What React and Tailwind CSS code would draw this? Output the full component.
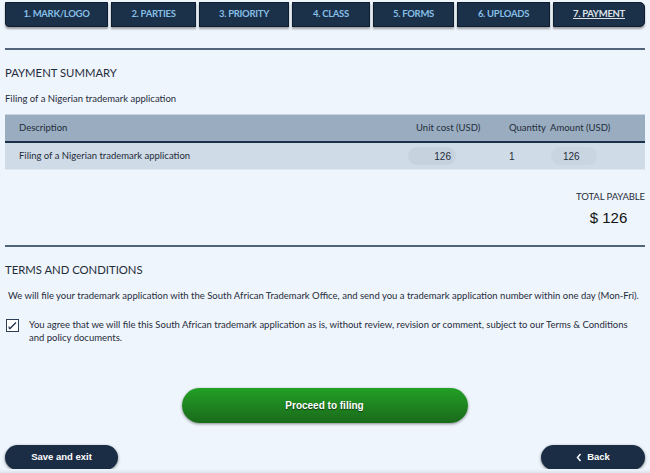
export default function App() {
  const tabs = [
    { label: "1. MARK/LOGO", w: "w-[103px]" },
    { label: "2. PARTIES", w: "w-[85px]" },
    { label: "3. PRIORITY", w: "w-[90px]" },
    { label: "4. CLASS", w: "w-[78px]" },
    { label: "5. FORMS", w: "w-[81px]" },
    { label: "6. UPLOADS", w: "w-[93px]" },
  ];
  return (
    <div className="w-[650px] h-[473px] overflow-hidden bg-[#eff5fd] text-[#1f2c3a] relative" style={{ fontFamily: "Lato, 'Open Sans', sans-serif" }}>
      <div className="px-[5px] pt-[2px]">
        <div className="flex gap-[3px] h-[25px]">
          {tabs.map((t, i) => (
            <div key={t.label} className={`${t.w} h-full bg-[#1b3049] border border-[#0f1c2c] shadow-[0_2px_2px_rgba(0,0,0,0.35)] flex items-center justify-center text-[9.5px] font-bold text-[#86bfe6] tracking-[-0.3px] ${i === 0 ? "rounded-bl-[4px]" : ""}`}>
              {t.label}
            </div>
          ))}
          <div className="flex-1 h-full bg-[#1b3049] border border-[#0f1c2c] rounded-r-[5px] shadow-[0_2px_2px_rgba(0,0,0,0.35)] flex items-center justify-center text-[9.5px] font-bold text-[#dfe3e8] underline tracking-[-0.3px]">
            7. PAYMENT
          </div>
        </div>

        <div className="mt-[21px] h-[2px] bg-[#51647a]" />

        <div className="mt-[15px] text-[11.3px] leading-[16px] text-[#1f2c3a]">PAYMENT SUMMARY</div>
        <div className="mt-[12px] text-[9.5px] leading-[12px]">Filing of a Nigerian trademark application</div>

        <div className="mt-[9px]">
          <div className="h-[29px] bg-[#99acc0] border-b-2 border-[#1a3048] border-t border-t-[#c8d4e0] flex items-center text-[9.5px] text-[#1f2c3a]">
            <div className="pl-[14px] w-[411px]">Description</div>
            <div className="w-[93px]">Unit cost (USD)</div>
            <div className="w-[41px]">Quantity</div>
            <div>Amount (USD)</div>
          </div>
          <div className="h-[27px] bg-[#cfdbe6] border-b border-[#dfe7ef] flex items-center text-[9.5px]">
            <div className="pl-[14px] w-[403px]">Filing of a Nigerian trademark application</div>
            <div className="w-[101px] flex">
              <div className="w-[48px] h-[18px] rounded-full bg-[#c6d3df] flex items-center justify-end pr-[5px] text-[10px]" style={{ fontFamily: "'Liberation Sans', Arial, sans-serif" }}>126</div>
            </div>
            <div className="w-[42px] text-[10px]" style={{ fontFamily: "'Liberation Sans', Arial, sans-serif" }}>1</div>
            <div className="w-[46px] h-[18px] rounded-full bg-[#c9d5e1] flex items-center pl-[12px] text-[10px]" style={{ fontFamily: "'Liberation Sans', Arial, sans-serif" }}>126</div>
          </div>
        </div>

        <div className="flex justify-end mt-[21px]">
          <div className="flex flex-col items-center">
            <div className="text-[9.5px] leading-[12px] tracking-[-0.1px]">TOTAL PAYABLE</div>
            <div className="mt-[6px] text-[15px] leading-[18px] text-[#111] pr-[4px]" style={{ fontFamily: "'Liberation Sans', Arial, sans-serif" }}>$ 126</div>
          </div>
        </div>

        <div className="mt-[18px] h-[2px] bg-[#51647a]" />

        <div className="mt-[15px] text-[11.3px] leading-[16px]">TERMS AND CONDITIONS</div>
        <div className="mt-[12px] pl-[3px] text-[9.5px] leading-[12px]">
          We will file your trademark application with the South African Trademark Office, and send you a trademark application number within one day (Mon-Fri).
        </div>
        <div className="mt-[16px] flex items-start">
          <div className="w-[13px] h-[13px] mt-[1px] ml-[1px] border border-[#2a3e57] bg-white flex items-center justify-center shrink-0">
            <svg width="9" height="9" viewBox="0 0 9 9"><path d="M1.5 8 L8 1.5" stroke="#1b2d45" strokeWidth="1.3" /><path d="M1 5.5 L1.5 8" stroke="#1b2d45" strokeWidth="1.2" /></svg>
          </div>
          <div className="ml-[10px] text-[9.5px] leading-[13px] w-[600px]">
            You agree that we will file this South African trademark application as is, without review, revision or comment, subject to our Terms &amp; Conditions and policy documents.
          </div>
        </div>

        <div className="mt-[44px] flex justify-center">
          <div className="w-[286px] h-[35px] ml-[-1px] rounded-full bg-gradient-to-b from-[#22a025] to-[#1a6a1b] shadow-[0_1px_3px_rgba(0,0,0,0.45)] flex items-center justify-center text-white text-[10px] font-bold [text-shadow:0_1px_1px_rgba(0,0,0,0.6)]" style={{ fontFamily: "'Liberation Sans', Arial, sans-serif" }}>
            Proceed to filing
          </div>
        </div>

        <div className="mt-[22px] flex justify-between">
          <div className="w-[113px] h-[25px] rounded-full bg-[#1b2d45] shadow-[0_1px_3px_rgba(0,0,0,0.5)] flex items-center justify-center text-white text-[9.5px] font-bold" style={{ fontFamily: "'Liberation Sans', Arial, sans-serif" }}>
            Save and exit
          </div>
          <div className="w-[104px] h-[25px] rounded-full bg-[#1b2d45] shadow-[0_1px_3px_rgba(0,0,0,0.5)] flex items-center justify-center gap-[5px] text-white text-[9.5px] font-bold" style={{ fontFamily: "'Liberation Sans', Arial, sans-serif" }}>
            <svg width="6" height="9" viewBox="0 0 6 9"><path d="M4.5 1 L1.5 4.5 L4.5 8" stroke="white" strokeWidth="1.5" fill="none" /></svg>
            Back
          </div>
        </div>
      </div>
      <div className="absolute left-0 right-0 bottom-0 h-[4px] bg-gradient-to-b from-[#eff5fd] to-[#dde3ea]" />
    </div>
  );
}
